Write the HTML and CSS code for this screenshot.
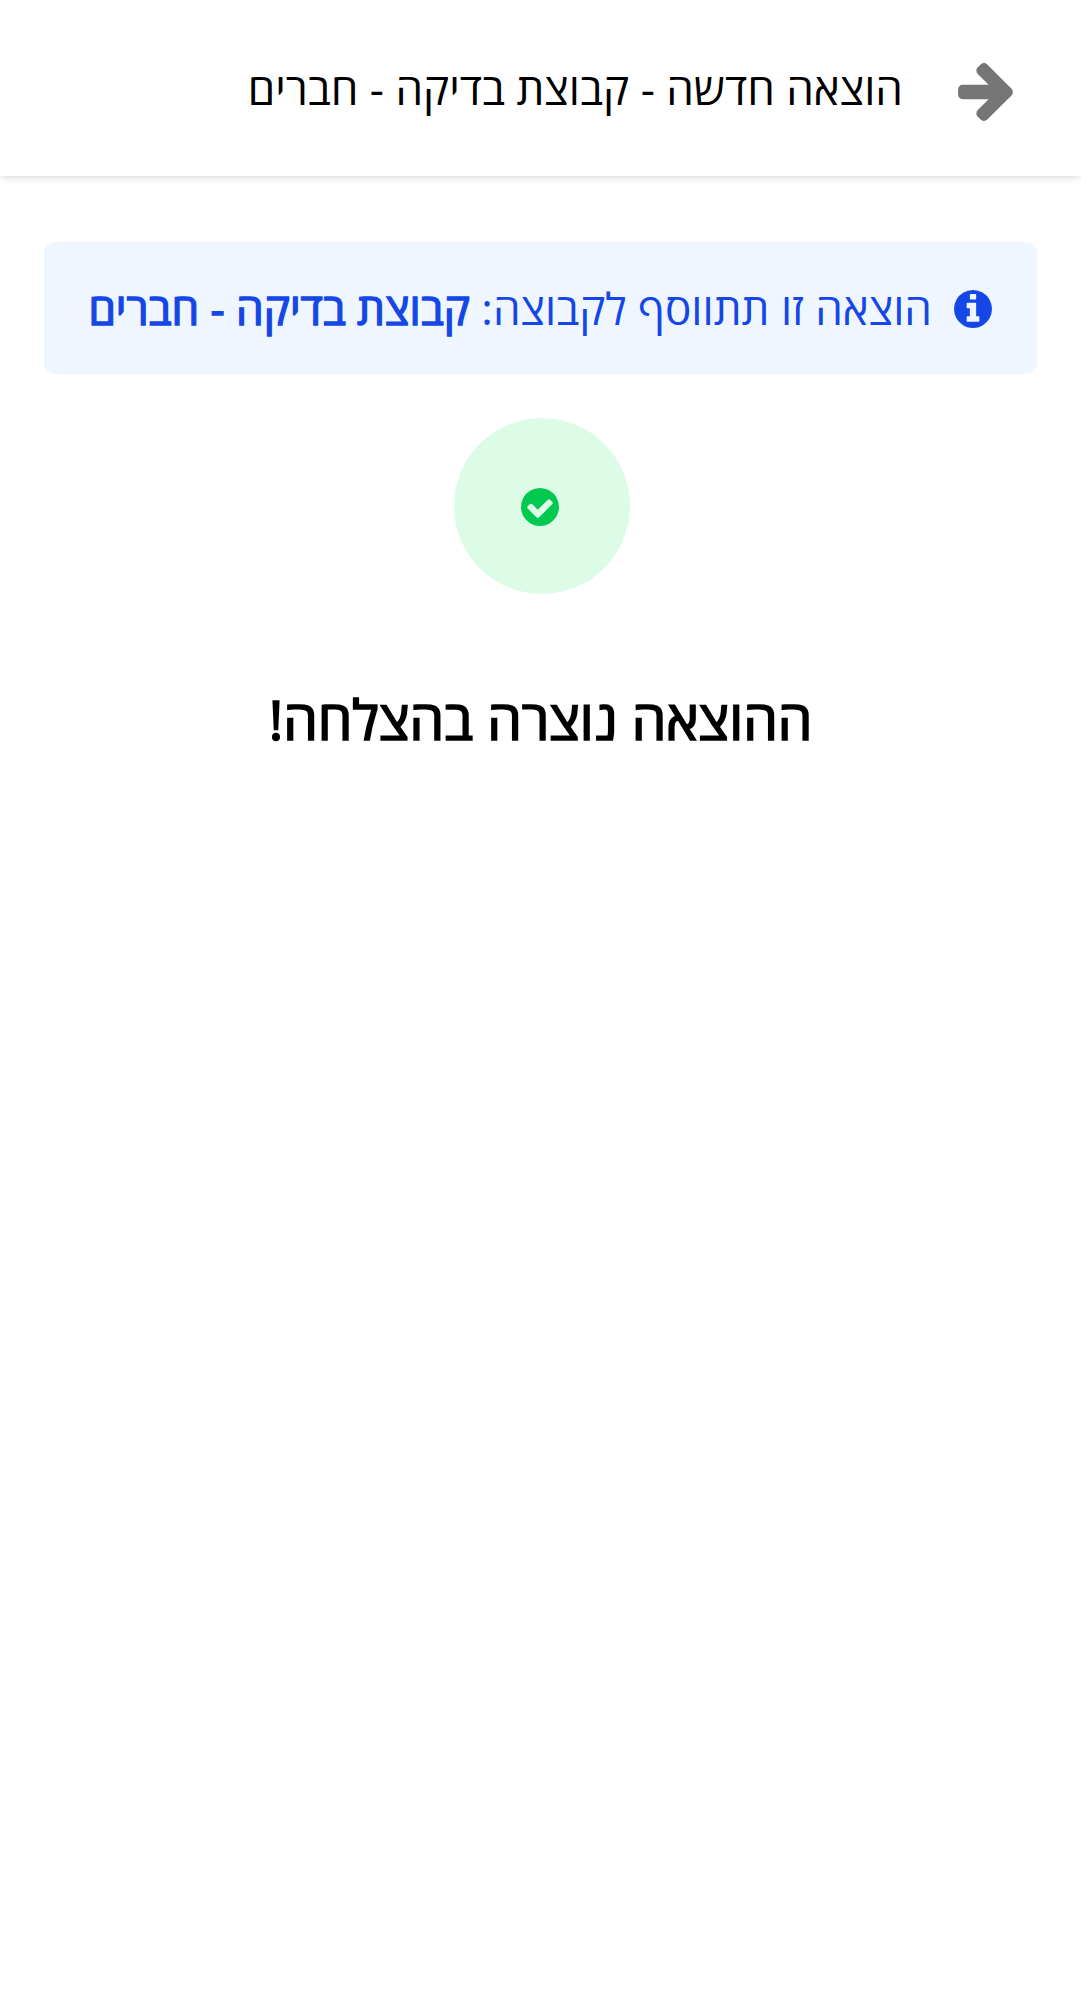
FILE: index.html
```html
<!DOCTYPE html>
<html lang="he" dir="rtl">
<head>
<meta charset="utf-8">
<title>הוצאה חדשה</title>
<link rel="stylesheet" href="styles.css">
</head>
<body>
<header class="topbar">
  <svg class="back" viewBox="128 181 1472 1558"><path d="M1600 960q0 54-37 91l-651 651q-39 37-91 37-51 0-90-37l-75-75q-38-38-38-91t38-91l293-293h-704q-52 0-84.500-37.500t-32.500-90.500v-128q0-53 32.500-90.500t84.500-37.500h704l-293-294q-38-36-38-90t38-90l75-75q38-38 90-38 53 0 91 38l651 651q37 35 37 90z"/></svg>
  <h1 class="title">הוצאה חדשה - קבוצת בדיקה - חברים</h1>
</header>
<main class="content">
  <div class="notice">
    <svg class="badge-icon" viewBox="128 128 1536 1536"><path d="M1152 1376v-160q0-14-9-23t-23-9h-96v-512q0-14-9-23t-23-9h-320q-14 0-23 9t-9 23v160q0 14 9 23t23 9h96v320h-96q-14 0-23 9t-9 23v160q0 14 9 23t23 9h448q14 0 23-9t9-23zm-128-896v-160q0-14-9-23t-23-9h-192q-14 0-23 9t-9 23v160q0 14 9 23t23 9h192q14 0 23-9t9-23zm640 416q0 209-103 385.500t-279.500 279.500-385.500 103-385.500-103-279.500-279.500-103-385.500 103-385.500 279.500-279.500 385.500-103 385.500 103 279.500 279.500 103 385.500z"/></svg>
    <p class="notice-text">הוצאה זו תתווסף לקבוצה: <strong class="group-name">קבוצת בדיקה - חברים</strong></p>
  </div>
  <div class="success">
    <svg class="badge-icon" viewBox="128 128 1536 1536"><path d="M1412 734q0-28-18-46l-91-90q-19-19-45-19t-45 19l-408 407-226-226q-19-19-45-19t-45 19l-91 90q-18 18-18 46 0 27 18 45l362 362q19 19 45 19 27 0 46-19l543-543q18-18 18-45zm252 162q0 209-103 385.500t-279.500 279.500-385.500 103-385.500-103-279.500-279.500-103-385.500 103-385.500 279.500-279.500 385.500-103 385.500 103 279.500 279.500 103 385.500z"/></svg>
  </div>
  <h2 class="message">ההוצאה נוצרה בהצלחה!</h2>
</main>
</body>
</html>
```
FILE: styles.css
```css
* { box-sizing: border-box; margin: 0; }
body { background: #fff; color: #000; font-family: "Open Sans", "Noto Sans", sans-serif; }
.topbar { height: 176px; display: flex; align-items: center; gap: 55px; padding: 0 68px; box-shadow: 0 2.75px 8.25px rgba(0,0,0,.1), 0 2.75px 5.5px -2.75px rgba(0,0,0,.1); }
.back { flex: none; width: 55px; height: 58px; margin-top: 7px; fill: #757575; }
.title { font-size: 44px; font-weight: 400; white-space: nowrap; }
.content { padding: 66px 44px; display: flex; flex-direction: column; align-items: center; }
.notice { width: 100%; height: 132px; display: flex; align-items: center; gap: 22px; padding: 0 45px; background: #eff6ff; border-radius: 11px; color: #1447e6; }
.badge-icon { flex: none; width: 38px; height: 38px; margin-top: 2px; fill: currentColor; }
.notice-text { font-size: 44px; white-space: nowrap; }
.group-name { font-weight: 400; -webkit-text-stroke: 1.4px currentColor; }
.success { width: 176px; height: 176px; margin: 44px 0 0 3px; padding-right: 4px; border-radius: 50%; background: #dcfce7; color: #00c950; display: flex; align-items: center; justify-content: center; }
.message { margin-top: 87px; font-size: 55px; font-weight: 400; -webkit-text-stroke: 1.7px currentColor; }
```
